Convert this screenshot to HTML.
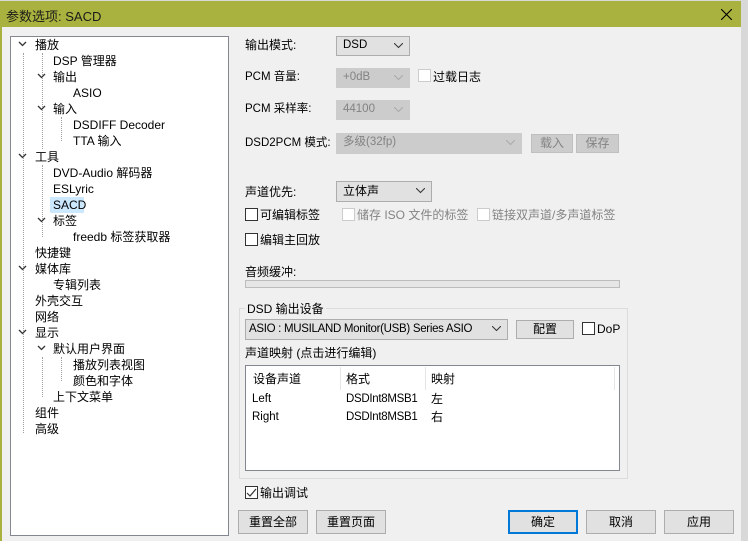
<!DOCTYPE html>
<html><head><meta charset="utf-8"><style>
*{margin:0;padding:0;box-sizing:border-box}
body{width:748px;height:541px;overflow:hidden;background:#d8d8d8;font-family:"Liberation Sans","Noto Sans CJK SC",sans-serif;font-size:12px;color:#000;position:relative}
.a{position:absolute;white-space:nowrap}
.t{line-height:16px;height:16px}
#dlg{position:absolute;left:0;top:1px;width:741px;height:540px;background:#a9b23e}
#body{position:absolute;left:2px;top:27px;width:739px;height:514px;background:#f0f0f0}
#tree{position:absolute;left:10px;top:36px;width:219px;height:500px;background:#fff;border:1px solid #828790}
.cb{position:absolute;width:13px;height:13px;border:1px solid #333;background:#fff}
.cb.d{border-color:#ccc}
.combo{position:absolute;border:1px solid #adadad;background:#e1e1e1;padding-left:6px;line-height:17px;font-size:11.5px;overflow:hidden}
.combo.d{background:#ccc;border-color:#ccc;color:#838383}
.combo svg{position:absolute;right:6px;top:6px}
.btn{position:absolute;border:1px solid #adadad;background:#e1e1e1;text-align:center;font-size:12px}
.btn.d{background:#ccc;border-color:#bfbfbf;color:#838383}
.g{color:#838383}
.dl{position:absolute;border-left:1px dotted #a0a0a0}
.sm{font-size:11.5px}
</style></head><body>
<div id="dlg"></div>
<div class="a" style="left:6px;top:6px;font-size:13px;color:#1a1a1a">参数选项: SACD</div>
<svg class="a" style="left:721px;top:9px" width="11" height="11"><path d="M0 0L11 11M11 0L0 11" stroke="#000" stroke-width="1.1"/></svg>
<div id="body"></div>
<div id="tree"></div>
<div class="dl" style="left:23px;top:53px;height:380px"></div>
<div class="dl" style="left:42px;top:53px;height:96px"></div>
<div class="dl" style="left:61px;top:117px;height:24px"></div>
<div class="dl" style="left:42px;top:165px;height:72px"></div>
<div class="dl" style="left:42px;top:357px;height:40px"></div>
<div class="dl" style="left:61px;top:357px;height:24px"></div>
<svg class="a" style="left:0;top:0" width="240" height="541">
<g fill="none" stroke="#333" stroke-width="1.3">
<path d="M19 42l3.5 3.5L26 42"/><path d="M38 74l3.5 3.5L45 74"/><path d="M38 106l3.5 3.5L45 106"/>
<path d="M19 154l3.5 3.5L26 154"/><path d="M38 218l3.5 3.5L45 218"/><path d="M19 266l3.5 3.5L26 266"/>
<path d="M19 330l3.5 3.5L26 330"/><path d="M38 346l3.5 3.5L45 346"/>
</g></svg>
<div class="a" style="left:50px;top:197px;width:34px;height:16px;background:#cce8ff"></div>
<div class="a t" style="left:35px;top:37px">播放</div>
<div class="a t" style="left:53px;top:53px">DSP 管理器</div>
<div class="a t" style="left:53px;top:69px">输出</div>
<div class="a t" style="left:73px;top:85px">ASIO</div>
<div class="a t" style="left:53px;top:101px">输入</div>
<div class="a t" style="left:73px;top:117px">DSDIFF Decoder</div>
<div class="a t" style="left:73px;top:133px">TTA 输入</div>
<div class="a t" style="left:35px;top:149px">工具</div>
<div class="a t" style="left:53px;top:165px">DVD-Audio 解码器</div>
<div class="a t" style="left:53px;top:181px">ESLyric</div>
<div class="a t" style="left:53px;top:197px">SACD</div>
<div class="a t" style="left:53px;top:213px">标签</div>
<div class="a t" style="left:73px;top:229px">freedb 标签获取器</div>
<div class="a t" style="left:35px;top:245px">快捷键</div>
<div class="a t" style="left:35px;top:261px">媒体库</div>
<div class="a t" style="left:53px;top:277px">专辑列表</div>
<div class="a t" style="left:35px;top:293px">外壳交互</div>
<div class="a t" style="left:35px;top:309px">网络</div>
<div class="a t" style="left:35px;top:325px">显示</div>
<div class="a t" style="left:53px;top:341px">默认用户界面</div>
<div class="a t" style="left:73px;top:357px">播放列表视图</div>
<div class="a t" style="left:73px;top:373px">颜色和字体</div>
<div class="a t" style="left:53px;top:389px">上下文菜单</div>
<div class="a t" style="left:35px;top:405px">组件</div>
<div class="a t" style="left:35px;top:421px">高级</div>

<div class="a t" style="left:245px;top:37px">输出模式:</div>
<div class="combo" style="left:336px;top:36px;width:74px;height:20px">DSD<svg width="9" height="6"><path d="M0 0l4.5 4.5L9 0" fill="none" stroke="#333"/></svg></div>
<div class="a t sm" style="left:245px;top:69px">PCM 音量:</div>
<div class="combo d" style="left:336px;top:68px;width:74px;height:20px">+0dB<svg width="9" height="6"><path d="M0 0l4.5 4.5L9 0" fill="none" stroke="#aaa"/></svg></div>
<div class="cb d" style="left:418px;top:69px"></div>
<div class="a t" style="left:433px;top:69px">过载日志</div>
<div class="a t sm" style="left:245px;top:101px">PCM 采样率:</div>
<div class="combo d" style="left:336px;top:100px;width:74px;height:20px">44100<svg width="9" height="6"><path d="M0 0l4.5 4.5L9 0" fill="none" stroke="#aaa"/></svg></div>
<div class="a t sm" style="left:245px;top:135px">DSD2PCM 模式:</div>
<div class="combo d" style="left:336px;top:133px;width:186px;height:21px">多级(32fp)<svg width="9" height="6"><path d="M0 0l4.5 4.5L9 0" fill="none" stroke="#aaa"/></svg></div>
<div class="btn d" style="left:531px;top:134px;width:42px;height:19px;line-height:17px">载入</div>
<div class="btn d" style="left:576px;top:134px;width:43px;height:19px;line-height:17px">保存</div>
<div class="a t" style="left:245px;top:184px">声道优先:</div>
<div class="combo" style="left:336px;top:181px;width:96px;height:21px;line-height:19px;font-size:12px">立体声<svg width="9" height="6"><path d="M0 0l4.5 4.5L9 0" fill="none" stroke="#333"/></svg></div>
<div class="cb" style="left:245px;top:208px"></div>
<div class="a t" style="left:260px;top:207px">可编辑标签</div>
<div class="cb d" style="left:342px;top:208px"></div>
<div class="a t g" style="left:357px;top:207px">储存 ISO 文件的标签</div>
<div class="cb d" style="left:477px;top:208px"></div>
<div class="a t g" style="left:492px;top:207px">链接双声道/多声道标签</div>
<div class="cb" style="left:245px;top:233px"></div>
<div class="a t" style="left:260px;top:232px">编辑主回放</div>
<div class="a t" style="left:245px;top:264px">音频缓冲:</div>
<div class="a" style="left:245px;top:280px;width:375px;height:8px;background:#e6e6e6;border:1px solid #bcbcbc"></div>
<div class="a" style="left:239px;top:308px;width:389px;height:171px;border:1px solid #dcdcdc"></div>
<div class="a t" style="left:245px;top:301px;background:#f0f0f0;padding:0 2px">DSD 输出设备</div>
<div class="combo" style="left:245px;top:319px;width:263px;height:21px;line-height:19px;padding-left:3px;font-size:11.5px;letter-spacing:-0.3px">ASIO : MUSILAND Monitor(USB) Series ASIO<svg width="9" height="6"><path d="M0 0l4.5 4.5L9 0" fill="none" stroke="#333"/></svg></div>
<div class="btn" style="left:516px;top:320px;width:58px;height:19px;line-height:17px">配置</div>
<div class="cb" style="left:582px;top:322px"></div>
<div class="a t" style="left:597px;top:321px">DoP</div>
<div class="a t" style="left:245px;top:345px">声道映射 (点击进行编辑)</div>
<div class="a" style="left:245px;top:365px;width:375px;height:106px;background:#fff;border:1px solid #828790"></div>
<div class="a" style="left:340px;top:367px;width:1px;height:23px;background:#e5e5e5"></div>
<div class="a" style="left:425px;top:367px;width:1px;height:23px;background:#e5e5e5"></div>
<div class="a" style="left:614px;top:367px;width:1px;height:23px;background:#e5e5e5"></div>
<div class="a t" style="left:253px;top:371px">设备声道</div>
<div class="a t" style="left:346px;top:371px">格式</div>
<div class="a t" style="left:431px;top:371px">映射</div>
<div class="a t sm" style="left:252px;top:391px">Left</div>
<div class="a t sm" style="left:346px;top:391px;letter-spacing:-0.3px">DSDInt8MSB1</div>
<div class="a t" style="left:431px;top:391px">左</div>
<div class="a t sm" style="left:252px;top:409px">Right</div>
<div class="a t sm" style="left:346px;top:409px;letter-spacing:-0.3px">DSDInt8MSB1</div>
<div class="a t" style="left:431px;top:409px">右</div>
<div class="cb" style="left:245px;top:486px"></div>
<svg class="a" style="left:246px;top:488px" width="12" height="10"><path d="M1 5l3 3 6-7" fill="none" stroke="#333" stroke-width="1.2"/></svg>
<div class="a t" style="left:260px;top:485px">输出调试</div>
<div class="btn" style="left:238px;top:510px;width:70px;height:24px;line-height:22px">重置全部</div>
<div class="btn" style="left:316px;top:510px;width:70px;height:24px;line-height:22px">重置页面</div>
<div class="btn" style="left:508px;top:510px;width:70px;height:24px;line-height:20px;border:2px solid #0078d7">确定</div>
<div class="btn" style="left:586px;top:510px;width:70px;height:24px;line-height:22px">取消</div>
<div class="btn" style="left:664px;top:510px;width:70px;height:24px;line-height:22px">应用</div>
</body></html>
